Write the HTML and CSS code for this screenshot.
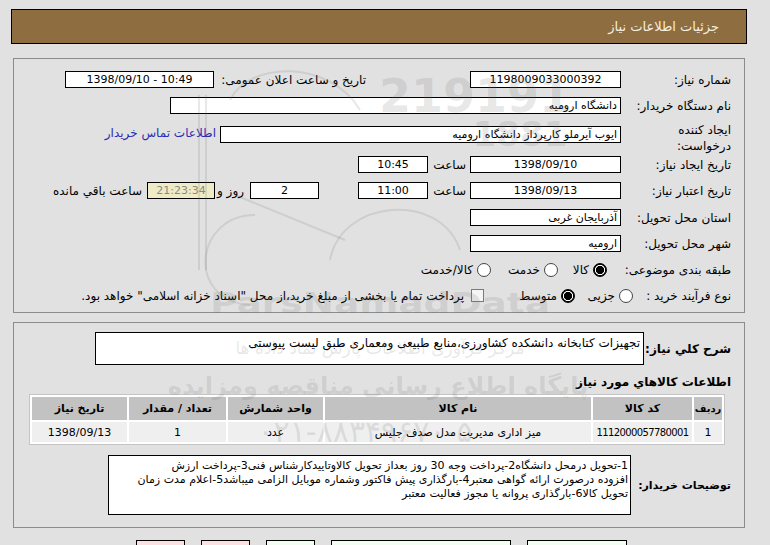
FILE: index.html
```html
<!DOCTYPE html>
<html lang="fa" dir="rtl">
<head>
<meta charset="utf-8">
<title>جزئیات اطلاعات نیاز</title>
<link rel="stylesheet" href="styles.css">
</head>
<body>
<div class="page">
  <div class="header">جزئیات اطلاعات نیاز</div>

  <div class="panel panel1">
    <div class="row first">
      <div class="lbl">شماره نیاز:</div>
      <div class="box c w151">1198009033000392</div>
      <div class="lbl ann">تاریخ و ساعت اعلان عمومی:</div>
      <div class="box c w149 ltr">1398/09/10 - 10:49</div>
    </div>
    <div class="row">
      <div class="lbl">نام دستگاه خریدار:</div>
      <div class="box w451">دانشگاه ارومیه</div>
    </div>
    <div class="row tall">
      <div class="lbl two">ایجاد کننده<br>درخواست:</div>
      <div class="box w401 mt4">ایوب آیرملو کارپرداز دانشگاه ارومیه</div>
      <a class="link mt4" href="#">اطلاعات تماس خریدار</a>
    </div>
    <div class="row near">
      <div class="lbl">تاریخ ایجاد نیاز:</div>
      <div class="box c w151">1398/09/10</div>
      <div class="saat">ساعت</div>
      <div class="box c w70">10:45</div>
    </div>
    <div class="row">
      <div class="lbl">تاریخ اعتبار نیاز:</div>
      <div class="box c w151">1398/09/13</div>
      <div class="saat">ساعت</div>
      <div class="box c w70">11:00</div>
      <div class="box c w69 days">2</div>
      <div class="rooz">روز و</div>
      <div class="box c w68 remain">21:23:34</div>
      <div class="rem-lbl">ساعت باقي مانده</div>
    </div>
    <div class="row r6">
      <div class="lbl">استان محل تحویل:</div>
      <div class="box w151">آذربایجان غربی</div>
    </div>
    <div class="row">
      <div class="lbl">شهر محل تحویل:</div>
      <div class="box w151">ارومیه</div>
    </div>
    <div class="row">
      <div class="lbl">طبقه بندی موضوعی:</div>
      <div class="opt-group g49 m14"><span class="radio on"></span><span class="opt">کالا</span></div>
      <div class="opt-group g67"><span class="radio"></span><span class="opt">خدمت</span></div>
      <div class="opt-group"><span class="radio"></span><span class="opt">کالا/خدمت</span></div>
    </div>
    <div class="row">
      <div class="lbl w98">نوع فرآیند خرید :</div>
      <div class="opt-group g58"><span class="radio"></span><span class="opt">جزیی</span></div>
      <div class="opt-group g91"><span class="radio on"></span><span class="opt">متوسط</span></div>
      <div class="opt-group"><span class="check"></span><span class="opt note">پرداخت تمام یا بخشی از مبلغ خرید،از محل "اسناد خزانه اسلامی" خواهد بود.</span></div>
    </div>
  </div>

  <div class="panel panel2">
    <div class="srow">
      <div class="blbl w87">شرح کلي نياز:</div>
      <div class="tbox sharh">تجهیزات کتابخانه دانشکده کشاورزی،منابع طبیعی ومعماری طبق لیست پیوستی</div>
    </div>
    <div class="section-title">اطلاعات کالاهاي مورد نياز</div>
    <table class="items">
      <colgroup>
        <col class="c1"><col class="c2"><col class="c3"><col class="c4"><col class="c5"><col class="c6">
      </colgroup>
      <thead>
        <tr>
          <th class="tight">ردیف</th>
          <th>کد کالا</th>
          <th>نام کالا</th>
          <th>واحد شمارش</th>
          <th>تعداد / مقدار</th>
          <th>تاریخ نیاز</th>
        </tr>
      </thead>
      <tbody>
        <tr>
          <td>1</td>
          <td class="code">1112000057780001</td>
          <td>میز اداری مدیریت مدل صدف جلیس</td>
          <td>عدد</td>
          <td>1</td>
          <td>1398/09/13</td>
        </tr>
      </tbody>
    </table>
    <div class="srow trow">
      <div class="blbl w100">توضیحات خریدار:</div>
      <div class="tbox desc">1-تحویل درمحل دانشگاه2-پرداخت وجه 30 روز بعداز تحویل کالاوتاییدکارشناس فنی3-پرداخت ارزش<br>افزوده درصورت ارائه گواهی معتبر4-بارگذاری پیش فاکتور وشماره موبایل الزامی میباشد5-اعلام مدت زمان<br>تحویل کالا6-بارگذاری پروانه یا مجوز فعالیت معتبر</div>
    </div>
  </div>

  <div class="buttons">
    <div class="btn green w100b"></div>
    <div class="btn green w180b"></div>
    <div class="btn green w49b"></div>
    <div class="btn pink w49b"></div>
    <div class="btn pink w49b"></div>
  </div>
</div>

<svg class="watermark" width="770" height="545" viewBox="0 0 770 545" xmlns="http://www.w3.org/2000/svg">
  <g fill="none" stroke="rgba(110,110,110,0.16)" stroke-width="2">
    <line x1="199" y1="95" x2="199" y2="270"/>
    <line x1="206" y1="95" x2="206" y2="270"/>
    <path d="M230 100 C 250 60, 330 60, 360 110"/>
    <path d="M255 215 C 195 215, 185 300, 250 305"/>
    <path d="M235 195 L 345 240"/>
    <path d="M330 260 C 340 200, 440 190, 460 250"/>
  </g>
  <g fill="rgba(110,110,110,0.17)" font-family="DejaVu Sans, sans-serif" font-weight="bold">
    <text x="475" y="112" font-size="46" text-anchor="middle">219191</text>
    <text x="520" y="146" font-size="34" text-anchor="middle">1881</text>
    <text x="380" y="313" font-size="28" text-anchor="middle" textLength="340" lengthAdjust="spacingAndGlyphs">ParsNamadData</text>
    <text x="380" y="354" font-size="17" font-weight="normal" text-anchor="middle" direction="rtl">مرکز فرآوری اطلاعات پارس نماد داده ها</text>
    <text x="378" y="394" font-size="24" text-anchor="middle" direction="rtl">پایگاه اطلاع رسانی مناقصه ومزایده</text>
    <text x="365" y="442" font-size="30" font-weight="normal" text-anchor="middle" direction="ltr">۰۲۱-۸۸۳۴۹۶۷۰-۵</text>
  </g>
</svg>
</body>
</html>
```
FILE: styles.css
```css
* { box-sizing: border-box; }
html, body { margin: 0; padding: 0; }
body {
  background: #e1e1e1;
  font-family: "DejaVu Sans", "Noto Sans", sans-serif;
  font-size: 12px;
  color: #000;
  width: 770px;
  height: 545px;
  overflow: hidden;
  position: relative;
}
.page { direction: rtl; width: 770px; padding-top: 9px; }

.header {
  margin-right: 23px;
  width: 736px;
  height: 35px;
  background: #8e6d40;
  border: 1px solid #000;
  color: #f6eedd;
  font-size: 13px;
  padding-right: 27px;
  display: flex;
  align-items: center;
}

.panel {
  margin-right: 25px;
  width: 732px;
  border: 1px solid #8c8c8c;
  padding: 12px 13px 8px 0;
}
.panel1 { margin-top: 14px; }
.panel2 { margin-top: 9px; padding: 9px 13px 12px 0; }

.row { display: flex; align-items: center; height: 17px; margin-top: 9px; white-space: nowrap; }
.row.first { margin-top: 0; }
.row.tall { height: 32px; margin-top: 8px; align-items: flex-start; }
.row.near { margin-top: 2px; }
.row.r6 { margin-top: 10px; }

.lbl { width: 110px; flex: none; text-align: right; }
.lbl.two { line-height: 16px; }
.lbl.ann { width: 152px; margin-right: 104px; }
.lbl.w98 { width: 98px; }
.mt4 { margin-top: 4px; }

.box {
  height: 17px;
  border: 1px solid #000;
  background: #fff;
  flex: none;
  display: flex;
  align-items: center;
  padding: 0 3px;
  white-space: nowrap;
  overflow: hidden;
  font-size: 11px;
}
.box.c { justify-content: center; }
.ltr { direction: ltr; }
.w151 { width: 151px; }
.w149 { width: 149px; }
.w451 { width: 451px; }
.w401 { width: 401px; }
.w70 { width: 70px; }
.w69 { width: 69px; }
.w68 { width: 68px; }

.link { color: #2b2bb3; text-decoration: none; margin-right: 4px; }
.saat { width: 42px; padding-right: 4px; flex: none; }
.days { margin-right: 39px; }
.rooz { width: 35px; padding-right: 6px; flex: none; white-space: nowrap; }
.remain { background: #eeebc6; color: #8a8a80; }
.rem-lbl { margin-right: 5px; }

.opt-group { display: flex; align-items: center; flex: none; }
.g49 { width: 49px; }
.g67 { width: 67px; }
.g58 { width: 58px; }
.g91 { width: 91px; }
.m14 { margin-right: 14px; }
.radio {
  width: 14px;
  height: 14px;
  border-radius: 50%;
  border: 1px solid #444;
  background: #fff;
  flex: none;
}
.radio.on {
  border: 1px solid #000;
  background: radial-gradient(circle, #000 0 3.8px, #fff 4.4px 4.8px, #000 5.4px);
}
.opt { margin-right: 4px; }
.check {
  width: 13px;
  height: 13px;
  border: 1px solid #7a7a7a;
  background: #f5f5f5;
  flex: none;
}
.note { margin-right: 7px; }

.srow { display: flex; align-items: center; }
.blbl { font-weight: bold; font-size: 12px; flex: none; text-align: right; white-space: nowrap; }
.w87 { width: 87px; }
.w100 { width: 100px; font-size: 11px; }
.tbox {
  border: 1px solid #000;
  background: #fff;
  flex: none;
  text-align: right;
}
.sharh { width: 549px; height: 33px; padding: 3px 3px 0 3px; line-height: 15px; }
.section-title { font-weight: bold; font-size: 12px; height: 16px; line-height: 16px; margin-top: 9px; }

.items {
  margin-top: 4px;
  margin-right: 6px;
  width: 696px;
  border-collapse: separate;
  border-spacing: 2px;
  background: #fff;
  border: 1px solid #c4c4c4;
  table-layout: fixed;
  font-size: 11px;
}
.items th {
  background: #c2c2c2;
  height: 23px;
  font-weight: bold;
  padding: 0;
  text-align: center;
  white-space: nowrap;
  overflow: hidden;
}
.items th.tight { font-size: 10px; letter-spacing: -0.3px; }
.items td {
  background: #efefef;
  height: 20px;
  padding: 0;
  text-align: center;
  white-space: nowrap;
  overflow: hidden;
}
.items td.code { font-size: 10px; letter-spacing: -0.6px; }
.c1 { width: 28px; }
.c2 { width: 99px; }
.c3 { width: 266px; }
.c4 { width: 95px; }
.c5 { width: 97px; }
.c6 { width: 95px; }

.trow { margin-top: 10px; }
.desc { width: 523px; height: 60px; padding: 3px 2px 0 2px; line-height: 14px; white-space: nowrap; overflow: hidden; font-size: 11px; letter-spacing: -0.2px; }

.buttons {
  display: flex;
  margin-top: 12px;
  margin-right: 25px;
  width: 732px;
  padding-right: 118px;
  gap: 16px;
}
.btn { height: 22px; border: 1px solid #000; flex: none; }
.green { background: #f1fff1; }
.pink { background: #ffe0e0; }
.w100b { width: 100px; }
.w180b { width: 180px; }
.w49b { width: 49px; }

.watermark { position: absolute; top: 0; left: 0; pointer-events: none; }
```
